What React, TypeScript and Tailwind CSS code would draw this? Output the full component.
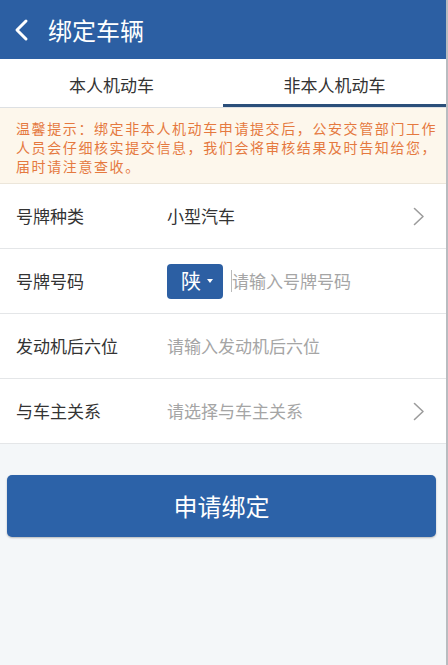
const font = { fontFamily: '"Noto Sans CJK SC", "Noto Sans", sans-serif' };

function Arrow() {
  return (
    <svg width="12" height="19" viewBox="0 0 12 19" fill="none" className="shrink-0">
      <polyline points="1.5,1.5 10,9.5 1.5,17.5" stroke="#9c9c9c" strokeWidth="1.6" strokeLinecap="round" strokeLinejoin="round" />
    </svg>
  );
}

function Row({ label, children, arrow }: { label: string; children: React.ReactNode; arrow?: boolean }) {
  return (
    <div className="flex h-[65px] items-center border-b border-[#e4e6e8] bg-white pl-4 pr-[21px]">
      <div className="w-[151px] text-[17px] text-[#333]">{label}</div>
      <div className="flex flex-1 items-center">{children}</div>
      {arrow && <Arrow />}
    </div>
  );
}

export default function App() {
  return (
    <div className="flex h-[665px] w-[448px] overflow-hidden" style={font}>
      <div className="flex w-[446px] flex-col bg-[#f4f7f9]">
        <div className="flex h-[59px] items-center bg-[#2c5fa3] pl-[14px] text-white">
          <svg width="16" height="24" viewBox="0 0 16 24" fill="none">
            <polyline points="12,3 3,12 12,21" stroke="white" strokeWidth="3" strokeLinecap="round" strokeLinejoin="round" />
          </svg>
          <span className="ml-[18px] text-[24px]">绑定车辆</span>
        </div>

        <div className="flex h-[49px] border-b border-[#dde0e3] bg-white text-[17px] text-[#333]">
          <div className="flex flex-1 items-center justify-center pt-1">本人机动车</div>
          <div className="flex flex-1 items-center justify-center border-b-[3px] border-[#2b4f7a] pt-1.5">
            非本人机动车
          </div>
        </div>

        <div className="whitespace-nowrap border-b border-[#ece6da] bg-[#fdf7ec] px-4 pt-[11px] pb-[7px] text-[14px] leading-[19px] tracking-[1.6px] text-[#e5793f]">
          温馨提示：绑定非本人机动车申请提交后，公安交管部门工作
          <br />
          人员会仔细核实提交信息，我们会将审核结果及时告知给您，
          <br />
          届时请注意查收。
        </div>

        <Row label="号牌种类" arrow>
          <span className="text-[17px] text-[#333]">小型汽车</span>
        </Row>
        <Row label="号牌号码">
          <div className="flex h-[35px] w-[56px] items-center justify-center gap-1.5 rounded-[4px] bg-[#2c5fa3] pl-1 text-white">
            <span className="text-[20px]">陕</span>
            <span className="h-0 w-0 border-x-[3px] border-t-[4px] border-x-transparent border-t-white" />
          </div>
          <span className="ml-2 h-[22px] w-px bg-[#bbb]" />
          <span className="text-[17px] text-[#a5a5a5]">请输入号牌号码</span>
        </Row>
        <Row label="发动机后六位">
          <span className="text-[17px] text-[#a5a5a5]">请输入发动机后六位</span>
        </Row>
        <Row label="与车主关系" arrow>
          <span className="text-[17px] text-[#a5a5a5]">请选择与车主关系</span>
        </Row>

        <div className="px-[7px] pt-[31px] pr-[10px]">
          <button className="flex h-[62px] w-full items-center justify-center rounded-[5px] bg-[#2c62a8] text-[24px] text-white shadow-[0_1px_2px_rgba(0,0,0,0.25)]">
            申请绑定
          </button>
        </div>
      </div>
      <div className="w-[2px] bg-[#b9bcc0]" />
    </div>
  );
}
